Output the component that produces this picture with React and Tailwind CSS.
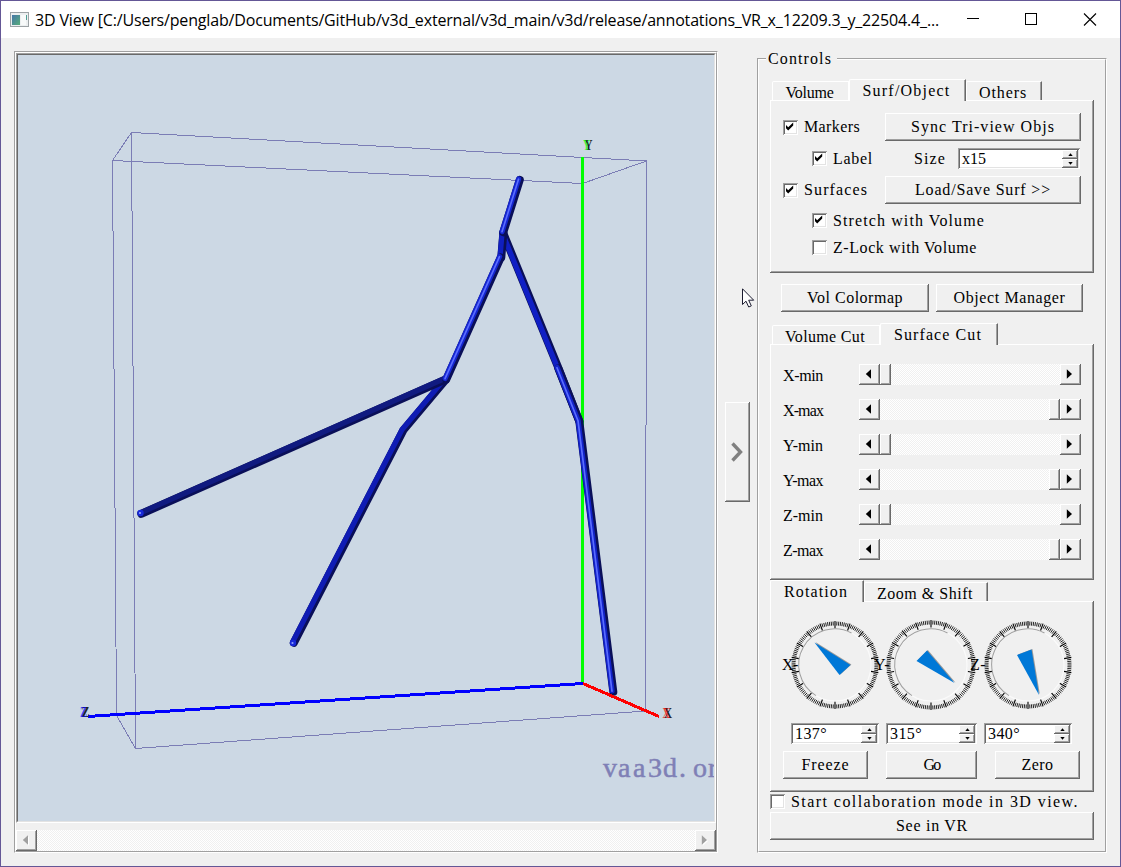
import { useLayoutEffect, useRef, useState } from "react";

const RAISED =
  "bg-[#f0f0f0] shadow-[inset_-1px_-1px_0_#696969,inset_1px_1px_0_#fff,inset_-2px_-2px_0_#a0a0a0]";
const SUNKEN =
  "bg-white shadow-[inset_1px_1px_0_#a0a0a0,inset_-1px_-1px_0_#fff,inset_2px_2px_0_#696969,inset_-2px_-2px_0_#e3e3e3]";
const TRACK =
  "bg-[repeating-conic-gradient(#ffffff_0_25%,#f0f0f0_0_50%)] bg-[length:2px_2px]";

// Text spread over a fixed advance (8px per character unless a width is given).
function T({ children, width, className = "" }) {
  const ref = useRef(null);
  const [gap, setGap] = useState(0);
  const target = width || children.length * 8;
  useLayoutEffect(() => {
    const el = ref.current;
    el.style.letterSpacing = "0px";
    const natural = el.getBoundingClientRect().width;
    const next = (target - natural) / children.length;
    el.style.letterSpacing = next + "px";
    setGap(next);
  }, [children, target]);
  return (
    <span ref={ref} className={"inline-block whitespace-pre " + className} style={{ letterSpacing: gap + "px" }}>
      {children}
    </span>
  );
}

function Button({ children, className = "" }) {
  return (
    <button className={`flex h-7 shrink-0 items-center justify-center ${RAISED} ${className}`}>
      <T>{children}</T>
    </button>
  );
}

function Check({ label, checked, className = "" }) {
  return (
    <label className={`flex h-[15px] shrink-0 items-center gap-[6px] ${className}`}>
      <span className={`flex size-[15px] shrink-0 items-center justify-center ${SUNKEN}`}>
        {checked && (
          <svg width="9" height="9" viewBox="0 0 9 9" className="mr-0.5 mb-0.5">
            <path d="M1 3 3.200 5.300 8.200 .4V3.500L3.200 8.400 1 6.200Z" fill="#000" />
          </svg>
        )}
      </span>
      <T>{label}</T>
    </label>
  );
}

function Spin({ value, className = "" }) {
  return (
    <div className={`flex h-[21px] shrink-0 items-center justify-between p-[2px] pl-1 ${SUNKEN} ${className}`}>
      <T>{value}</T>
      <div className="flex flex-col">
        <div className={`flex h-[9px] w-4 items-center justify-center ${RAISED}`}>
          <svg width="5" height="3" viewBox="0 0 5 3"><path d="M.3 2.900 2.500 .3 4.700 2.900Z" /></svg>
        </div>
        <div className={`flex h-[9px] w-4 items-center justify-center ${RAISED}`}>
          <svg width="5" height="3" viewBox="0 0 5 3"><path d="M.3 .1 2.500 2.700 4.700 .1Z" /></svg>
        </div>
      </div>
    </div>
  );
}

function Arrow({ dir, disabled, className = "" }) {
  const d = dir === "left" ? "M6 .3V9.700L.8 5Z" : "M.8 .3V9.700L6 5Z";
  return (
    <div className={`flex size-[21px] shrink-0 items-center justify-center ${RAISED} ${className}`}>
      <svg width="7" height="10" viewBox="0 0 7 10" className="mr-0.5 mb-0.5 overflow-visible">
        {disabled && <path d={d} fill="#fff" transform="translate(1 1)" />}
        <path d={d} fill={disabled ? "#a0a0a0" : "#000"} />
      </svg>
    </div>
  );
}

function CutRow({ label, atEnd }) {
  return (
    <div className="flex h-[21px] items-center">
      <div className="w-[76px] pt-0.5"><T>{label}</T></div>
      <div className={`flex w-[222px] ${TRACK}`}>
        <Arrow dir="left" />
        {atEnd && <div className="grow" />}
        <div className={`h-[21px] w-[11px] ${RAISED}`} />
        {!atEnd && <div className="grow" />}
        <Arrow dir="right" />
      </div>
    </div>
  );
}

function Tab({ children, active, whiteRight, className = "" }) {
  const edge = whiteRight ? "border-r border-r-white" : "border-r border-r-[#696969] shadow-[inset_-1px_0_0_#a0a0a0]";
  const size = active ? "h-[22px] -mb-px z-10 pt-px" : "h-[19px] pt-[3px]";
  return (
    <div className={`relative flex shrink-0 items-center justify-center rounded-tl-[2px] border-t border-l border-t-white border-l-white bg-[#f0f0f0] ${edge} ${size} ${className}`}>
      <T className="-ml-0.5">{children}</T>
    </div>
  );
}

function Dial({ letter, r, tip, a, b, tx }) {
  const ticks = [];
  for (let i = 0; i < 144; i++) {
    const major = i % 8 === 0;
    const t = (i * 2.5 * Math.PI) / 180;
    const r1 = major ? r - 7.5 : r - 4.5;
    const r2 = major ? r : r - 0.5;
    ticks.push(
      <line key={i} x1={50 + r1 * Math.sin(t)} y1={50 - r1 * Math.cos(t)} x2={50 + r2 * Math.sin(t)} y2={50 - r2 * Math.cos(t)}
        stroke="#000" strokeWidth={major ? 1.1 : 0.85} />
    );
  }
  return (
    <div className="relative size-[100px] shrink-0">
      <svg width="100" height="100" viewBox="0 0 100 100">
        {ticks}
        <circle cx="50" cy="50" r="36" fill="none" stroke="#fafafa" strokeWidth="1.2" />
        <path d="M31 80.6A36 36 0 0 1 66.5 18" fill="none" stroke="#a0a0a0" strokeWidth="1.1" />
        <polygon points={`${tip} ${a} ${b}`} fill="#999" transform="translate(.9 -.5)" />
        <polygon points={`${tip} ${a} ${b}`} fill="#0078d7" />
      </svg>
      <div className={`absolute top-[41px] ${tx}`}><T>{letter + "-"}</T></div>
    </div>
  );
}

const PANEL = `flex h-full flex-col ${RAISED}`;

function Tube({ pts, main, light }) {
  return (
    <g fill="none" strokeLinecap="round" strokeLinejoin="round">
      <polyline points={pts} stroke="#0a0f58" strokeWidth="8" transform="translate(.3 .3)" />
      <polyline points={pts} stroke={main} strokeWidth="5.2" transform="translate(-.9 -.5)" />
      {light && <polyline points={pts} stroke="#5a6cff" strokeWidth="1.7" transform="translate(-1 -.3)" />}
    </g>
  );
}

function AxisLetter({ x, y, fill, children }) {
  return (
    <g fontFamily="Liberation Serif, serif" fontSize="15" fontWeight="bold">
      <text x={x + 1} y={y} fill="#222" textLength="8" lengthAdjust="spacingAndGlyphs">{children}</text>
      <text x={x - 0.5} y={y} fill={fill} textLength="7" lengthAdjust="spacingAndGlyphs" opacity="0.7">{children}</text>
    </g>
  );
}

function Scene() {
  return (
    <svg width="696" height="766" viewBox="18 55 696 766" className="block">
      <rect x="18" y="55" width="696" height="766" fill="#ccd8e4" />
      <g stroke="#7b7db5" strokeWidth="1" fill="none" shapeRendering="crispEdges">
        <polyline points="131.5,132.5 646.5,161 645.5,711 135.5,748.5 131.5,132.5 112.5,160.5 116.5,715.5 135.5,748.5" />
        <polyline points="112.5,160.5 582.5,183.5 646.5,161" />
      </g>
      <g strokeWidth="3" shapeRendering="crispEdges">
        <line x1="582.5" y1="157" x2="582.5" y2="684" stroke="#00ff00" />
        <line x1="583" y1="683.5" x2="88" y2="716.5" stroke="#0000ff" />
      </g>
      <Tube pts="445,380 403,430 293.5,642.5" main="#0f1cb4" />
      <Tube pts="445.5,379 141,513.5" main="#101a80" />
      <Tube pts="503,233 557,365 579,421" main="#101fc4" />
      <Tube pts="558,368 579,421 613,691.5" main="#1222c8" light />
      <Tube pts="503,233 501,257" main="#101fc0" />
      <Tube pts="500.5,257 446,379" main="#1526d0" light />
      <Tube pts="519.5,179.5 503,232" main="#1526d0" light />
      <circle cx="140.5" cy="513" r="3.2" fill="#1728d8" />
      <circle cx="140" cy="513" r="1.1" fill="#8fa0ff" />
      <circle cx="293" cy="643" r="3.2" fill="#1728d8" />
      <circle cx="292.5" cy="643" r="1.1" fill="#8fa0ff" />
      <line x1="583" y1="683.5" x2="659" y2="716.5" stroke="#ff0000" strokeWidth="3" shapeRendering="crispEdges" />
      <AxisLetter x={583.5} y={149.5} fill="#00ff00">Y</AxisLetter>
      <AxisLetter x={663} y={718} fill="#ff0000">X</AxisLetter>
      <AxisLetter x={80.5} y={717} fill="#0000ff">Z</AxisLetter>
      <text x="603 618 633 648 663 679 693 708 723" y="777" fontFamily="Liberation Serif, serif" fontSize="28" fill="#7f80b6" stroke="#7f80b6" strokeWidth="0.5">
        vaa3d.org
      </text>
    </svg>
  );
}

export default function App() {
  return (
    <div className="relative flex h-[867px] w-[1121px] flex-col overflow-hidden border border-[#645796] bg-[#f0f0f0] font-['Liberation_Serif',serif] text-[16px] leading-[18px] text-black">
      <header className="flex h-[37px] shrink-0 items-center bg-white pl-[9px]">
        <svg width="19" height="16" viewBox="0 0 19 16" className="shrink-0">
          <defs>
            <linearGradient id="pic" x1="0" y1="0" x2="1" y2="1">
              <stop offset="0" stopColor="#4676a8" />
              <stop offset="1" stopColor="#57ad7a" />
            </linearGradient>
          </defs>
          <rect x=".5" y=".5" width="18" height="14" fill="#eceff0" stroke="#9da3a6" />
          <rect x="2" y="3" width="8" height="10" fill="url(#pic)" />
          <rect x="11" y="3" width="5" height="10" fill="#f8fafa" />
          <rect x="16" y="3" width="1" height="5" fill="#4f9e94" />
        </svg>
        <div className="ml-[6px] w-[910px] font-['Open_Sans','Noto_Sans',sans-serif] text-[16px] leading-6">
          <T width={904}>3D View [C:/Users/penglab/Documents/GitHub/v3d_external/v3d_main/v3d/release/annotations_VR_x_12209.3_y_22504.4_...</T>
        </div>
        <svg width="150" height="20" viewBox="0 0 150 20" className="mb-px ml-[20px] shrink-0" fill="none" stroke="#000">
          <path d="M2 9.5h12M60.500 4.500h11v11h-11z" shapeRendering="crispEdges" />
          <path d="M119 4.500l12 12M131 4.500l-12 12" strokeWidth="1.1" />
        </svg>
      </header>

      <main className="flex grow">
        <section className="mt-[13px] ml-[13px] h-[802px] w-[704px] shrink-0 border border-t-[#a0a0a0] border-r-white border-b-white border-l-[#a0a0a0]">
          <div className="flex h-full flex-col justify-between border border-t-white border-r-[#a0a0a0] border-b-[#a0a0a0] border-l-white">
            <div className="border border-t-[#a0a0a0] border-r-white border-b-white border-l-[#a0a0a0]">
              <div className="border border-t-[#696969] border-r-[#e3e3e3] border-b-[#e3e3e3] border-l-[#696969]">
                <Scene />
              </div>
            </div>
            <div className={`flex justify-between ${TRACK}`}>
              <Arrow dir="left" disabled />
              <Arrow dir="right" disabled />
            </div>
          </div>
        </section>

        <button className={`mt-[364px] ml-[7px] flex h-[100px] w-[25px] shrink-0 items-center justify-center ${RAISED}`}>
          <svg width="12" height="20" viewBox="0 0 12 20" className="mr-0.5" fill="none" stroke="#808080" strokeWidth="3.4">
            <path d="M1.500 1.500 9.500 10 1.500 18.500" />
          </svg>
        </button>

        <fieldset className="mt-[20px] ml-[7px] h-[795px] w-[350px] shrink-0 border border-t-[#a0a0a0] border-r-white border-b-white border-l-[#a0a0a0]">
          <div className="h-full border border-t-white border-r-[#a0a0a0] border-b-[#a0a0a0] border-l-white pl-[11px]">
            <div className="-mt-[10px] ml-[-4px] flex h-[18px] w-[71px] justify-start bg-[#f0f0f0] pl-[2px]">
              <T>Controls</T>
            </div>

            <div className="mt-[11px] flex h-[21px] items-end pl-[2px]">
              <Tab whiteRight className="w-[77px]">Volume</Tab>
              <Tab active className="w-[117px]">Surf/Object</Tab>
              <Tab className="w-[76px]">Others</Tab>
            </div>
            <div className="h-[173px] w-[324px]">
              <div className={PANEL}>
                <div className="mt-[13px] flex items-center">
                  <Check label="Markers" checked className="ml-[13px] w-[102px]" />
                  <Button className="w-[196px]">Sync Tri-view Objs</Button>
                </div>
                <div className="mt-[7px] flex items-center">
                  <Check label="Label" checked className="ml-[42px] w-[102px]" />
                  <T>Size</T>
                  <Spin value="x15" className="ml-[12px] w-[122px]" />
                </div>
                <div className="mt-[7px] flex items-center">
                  <Check label="Surfaces" checked className="ml-[13px] w-[102px]" />
                  <Button className="w-[196px]">{"Load/Save Surf >>"}</Button>
                </div>
                <Check label="Stretch with Volume" checked className="mt-[9px] ml-[42px]" />
                <Check label="Z-Lock with Volume" className="mt-[12px] ml-[42px]" />
              </div>
            </div>

            <div className="mt-[11px] flex gap-[7px] pl-[11px]">
              <Button className="w-[148px]">Vol Colormap</Button>
              <Button className="w-[147px]">Object Manager</Button>
            </div>

            <div className="mt-[11px] flex h-[21px] items-end pl-[2px]">
              <Tab whiteRight className="w-[108px]">Volume Cut</Tab>
              <Tab active className="w-[118px]">Surface Cut</Tab>
            </div>
            <div className="h-[236px] w-[324px]">
              <div className={`${PANEL} gap-[14px] pt-[20px] pl-[13px]`}>
                <CutRow label="X-min" />
                <CutRow label="X-max" atEnd />
                <CutRow label="Y-min" />
                <CutRow label="Y-max" atEnd />
                <CutRow label="Z-min" />
                <CutRow label="Z-max" atEnd />
              </div>
            </div>

            <div className="flex h-[21px] items-end">
              <Tab active className="w-[94px]">Rotation</Tab>
              <Tab className="w-[124px]">{"Zoom & Shift"}</Tab>
            </div>
            <div className="h-[191px] w-[324px]">
              <div className={PANEL}>
                <div className="mt-[14px] flex h-[100px] pl-[15px]">
                  <Dial letter="X" r={44} tip="29.500,27.500" a="65.500,50" b="54.500,60" tx="left-[-3px]" />
                  <div className="-ml-1"><Dial letter="Y" r={45} tip="73.500,68" a="46,35.500" b="35.500,46" tx="left-[-7px]" /></div>
                  <div className="-ml-[3px]"><Dial letter="Z" r={44} tip="61,80" a="53.500,34.500" b="39,40" tx="left-[-8px]" /></div>
                </div>
                <div className="mt-[8px] flex pl-[21px]">
                  <Spin value="137°" className="w-[88px]" />
                  <Spin value="315°" className="ml-[7px] w-[91px]" />
                  <Spin value="340°" className="ml-[7px] w-[88px]" />
                </div>
                <div className="mt-[7px] flex pl-[13px]">
                  <Button className="w-[85px]">Freeze</Button>
                  <Button className="ml-[18px] w-[91px]">Go</Button>
                  <Button className="ml-[18px] w-[85px]">Zero</Button>
                </div>
              </div>
            </div>
            <Check label="Start collaboration mode in 3D view." className="mt-[2px]" />
            <Button className="mt-[3px] w-[324px]">See in VR</Button>
          </div>
        </fieldset>
      </main>

      <svg width="13" height="20" viewBox="0 0 13 20" className="absolute top-[287px] left-[741px]">
        <path d="M.5 .8V16.500L4 13.200 6.700 19 9.300 17.900 6.700 12.200H11.700Z" fill="#fff" stroke="#1c1c30" />
      </svg>
    </div>
  );
}
